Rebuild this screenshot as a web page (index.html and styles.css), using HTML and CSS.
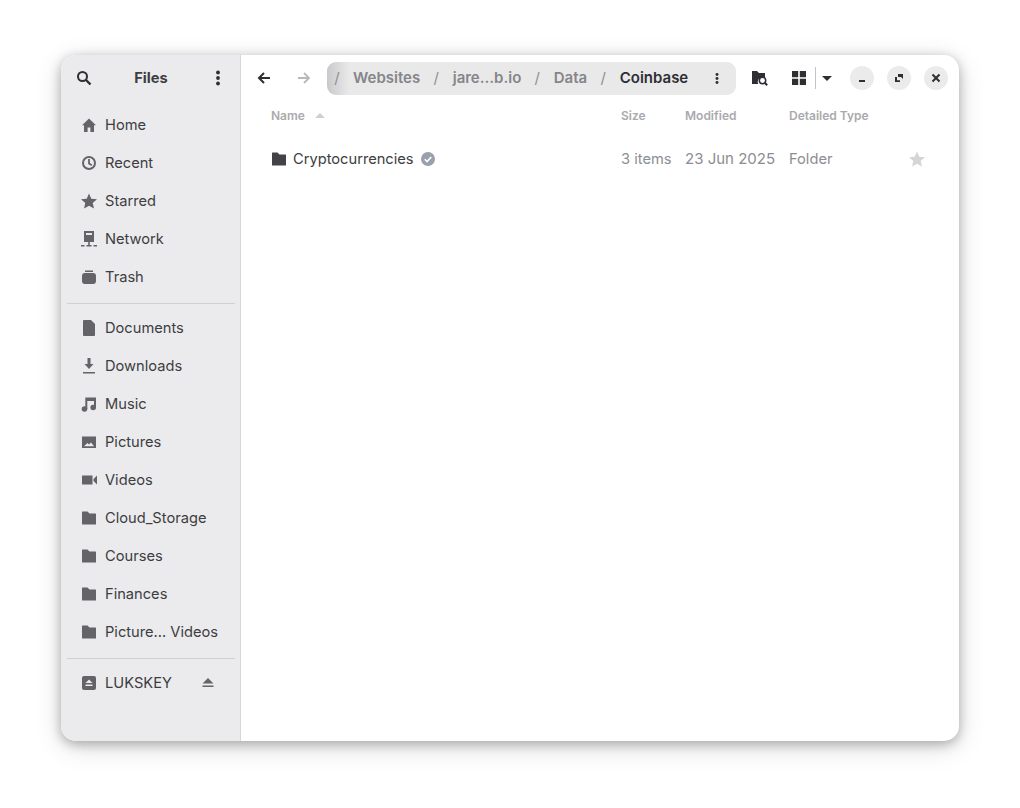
FILE: index.html
```html
<!DOCTYPE html>
<html lang="en">
<head>
<meta charset="utf-8">
<title>Files</title>
<link rel="stylesheet" href="styles.css">
</head>
<body>
<main class="window">
  <aside class="sidebar">
    <header class="side-head">
      <svg class="ico16 dark" viewBox="0 0 16 16"><circle cx="6.5" cy="6.5" r="4.500" fill="none" stroke="currentColor" stroke-width="2"/><path d="M10 10l4.500 4.500" stroke="currentColor" stroke-width="2.400" fill="none"/></svg>
      <span class="side-title">Files</span>
      <svg class="ico16 dark" viewBox="0 0 16 16"><circle cx="8" cy="2.500" r="1.900"/><circle cx="8" cy="8" r="1.900"/><circle cx="8" cy="13.500" r="1.900"/></svg>
    </header>
    <ul class="places">
      <li class="place"><svg class="ico16" viewBox="0 0 16 16"><path d="M8 1.500L1 8.200h2V15h3.600v-4.500h2.800V15H13V8.200h2z"/></svg>Home</li>
      <li class="place"><svg class="ico16" viewBox="0 0 16 16"><circle cx="8" cy="8" r="6" fill="none" stroke="currentColor" stroke-width="2"/><path d="M8 4v4.400l2.800 1.800" fill="none" stroke="currentColor" stroke-width="1.800"/></svg>Recent</li>
      <li class="place"><svg class="ico16" viewBox="0 0 16 16"><path d="M8 .5l2.300 5.200 5.700.6-4.300 3.700 1.300 5.600L8 12.700 3 15.600l1.300-5.600L0 6.300l5.700-.6z"/></svg>Starred</li>
      <li class="place"><svg class="ico16" viewBox="0 0 16 16"><path d="M3 .5a1 1 0 0 1 1-1h8a1 1 0 0 1 1 1V11H3zM5 2v2h6V2z" fill-rule="evenodd"/><path d="M0 14h3.500v1.500H0zM5.500 14h5v1.500h-5zM12.500 14H16v1.500h-3.500zM7.200 11h1.600v3H7.200z"/></svg>Network</li>
      <li class="place"><svg class="ico16" viewBox="0 0 16 16"><path d="M4 1.500h8V3H4zM4 4h8a3 3 0 0 1 3 3v5a3 3 0 0 1-3 3H4a3 3 0 0 1-3-3V7a3 3 0 0 1 3-3z"/></svg>Trash</li>
    </ul>
    <hr class="rule rule-first">
    <ul class="places">
      <li class="place"><svg class="ico16" viewBox="0 0 16 16"><path d="M2 1a1 1 0 0 1 1-1h7l4 4v11a1 1 0 0 1-1 1H3a1 1 0 0 1-1-1z"/></svg>Documents</li>
      <li class="place"><svg class="ico16" viewBox="0 0 16 16"><path d="M6.500 0h3v6h3L8 11 3.500 6h3zM2 14h12v1.600H2z"/></svg>Downloads</li>
      <li class="place"><svg class="ico16" viewBox="0 0 16 16"><circle cx="3.500" cy="13" r="2.800"/><circle cx="12.200" cy="11.500" r="2.800"/><path d="M4.300 1.500H15v10h-2V5H6.300v8h-2z"/></svg>Music</li>
      <li class="place"><svg class="ico16" viewBox="0 0 16 16"><path d="M1 2.500h14V14H1zm2 9.800h10l-3-3.800-2 2-1.500-1.500z" fill-rule="evenodd"/></svg>Pictures</li>
      <li class="place"><svg class="ico16" viewBox="0 0 16 16"><path d="M1 3.500h10.500v9H1zM12.500 7L16 3.500v9L12.500 9z"/></svg>Videos</li>
      <li class="place"><svg class="ico16" viewBox="0 0 16 16"><use href="#folder"/></svg>Cloud_Storage</li>
      <li class="place"><svg class="ico16" viewBox="0 0 16 16"><use href="#folder"/></svg>Courses</li>
      <li class="place"><svg class="ico16" viewBox="0 0 16 16"><use href="#folder"/></svg>Finances</li>
      <li class="place"><svg class="ico16" viewBox="0 0 16 16"><use href="#folder"/></svg>Picture... Videos</li>
    </ul>
    <hr class="rule rule-second">
    <ul class="places">
      <li class="place"><svg class="ico16" viewBox="0 0 16 16"><path d="M3 1h10a2 2 0 0 1 2 2v10a2 2 0 0 1-2 2H3a2 2 0 0 1-2-2V3a2 2 0 0 1 2-2zm5 3.500L4.500 8h7zM4.500 9.500V11h7V9.500z" fill-rule="evenodd"/></svg><span class="grow">LUKSKEY</span><svg class="ico-eject" viewBox="0 0 12 10"><path d="M6 0l5.500 5.500H.5zM.5 7.500h11V9H.5z"/></svg></li>
    </ul>
  </aside>

  <section class="content">
    <header class="toolbar">
      <svg class="nav-ico dark-ico" viewBox="0 0 16 16"><path d="M14 8H3M8 3L3 8l5 5" fill="none" stroke="currentColor" stroke-width="2"/></svg>
      <svg class="nav-ico faint-ico" viewBox="0 0 16 16"><path d="M2 8h11M8 3l5 5-5 5" fill="none" stroke="currentColor" stroke-width="1.800"/></svg>
      <nav class="path">
        <span class="sep sep-root">/</span>
        <span class="crumb">Websites</span>
        <span class="sep">/</span>
        <span class="crumb">jare…b.io</span>
        <span class="sep">/</span>
        <span class="crumb">Data</span>
        <span class="sep">/</span>
        <span class="crumb current">Coinbase</span>
        <svg class="path-menu" viewBox="0 0 4 12"><circle cx="2" cy="1.700" r="1.600"/><circle cx="2" cy="6" r="1.600"/><circle cx="2" cy="10.300" r="1.600"/></svg>
      </nav>
      <svg class="find-ico" viewBox="0 0 16 16"><path d="M0 1h5l2 2h6v4.500A5 5 0 0 0 6.200 14H0z"/><circle cx="10.500" cy="10.500" r="3.200" fill="none" stroke="currentColor" stroke-width="1.500"/><path d="M12.800 12.800l2.400 2.400" stroke="currentColor" stroke-width="2"/></svg>
      <svg class="grid-ico" viewBox="0 0 14 14"><path d="M0 0h6.200v6.200H0zM7.800 0H14v6.200H7.800zM0 7.800h6.200V14H0zM7.800 7.800H14V14H7.800z"/></svg>
      <span class="divider"></span>
      <svg class="caret-ico" viewBox="0 0 10 5"><path d="M0 0h10L5 5z"/></svg>
      <div class="win-buttons">
        <button class="win-btn"><svg viewBox="0 0 10 10"><path d="M2 7h6v2H2z"/></svg></button>
        <button class="win-btn"><svg viewBox="0 0 10 10"><path d="M4 1h5v5L7 4H4zM1 4v5h5V7.200H3V4z"/></svg></button>
        <button class="win-btn"><svg viewBox="0 0 10 10"><path d="M1.500 1.500l7 7M8.500 1.500l-7 7" stroke="currentColor" stroke-width="2" fill="none"/></svg></button>
      </div>
    </header>
    <div class="columns">
      <span class="col-name col-head">Name<svg class="sort-ico" viewBox="0 0 10 5"><path d="M5 0l5 5H0z"/></svg></span>
      <span class="col-size col-head">Size</span>
      <span class="col-mod col-head">Modified</span>
      <span class="col-type col-head">Detailed Type</span>
    </div>
    <div class="row">
      <span class="col-name file-name">
        <svg class="file-ico" viewBox="0 0 16 16"><use href="#folder"/></svg>
        Cryptocurrencies
        <svg class="emblem" viewBox="0 0 14 14"><circle cx="7" cy="7" r="7" fill="#99a1ac"/><path d="M3.800 7.200l2.300 2.300 4.200-4.500" fill="none" stroke="#fff" stroke-width="1.600"/></svg>
      </span>
      <span class="col-size muted">3 items</span>
      <span class="col-mod muted date">23 Jun 2025</span>
      <span class="col-type muted">Folder</span>
      <svg class="row-star" viewBox="0 0 16 16"><path d="M8 .5l2.300 5.200 5.700.6-4.300 3.700 1.300 5.600L8 12.700 3 15.600l1.300-5.600L0 6.300l5.700-.6z"/></svg>
    </div>
  </section>
</main>
<svg class="defs" aria-hidden="true"><defs><path id="folder" d="M1 2a.5.5 0 0 1 .5-.5h5L8.500 3.500H14.500a.5.5 0 0 1 .5.5v10a.5.5 0 0 1-.5.5h-13a.5.5 0 0 1-.5-.5z" fill="currentColor"/></defs></svg>
</body>
</html>
```

FILE: styles.css
```css
* { box-sizing: border-box; }
html, body { margin: 0; height: 100%; }
body {
  width: 1020px;
  height: 808px;
  padding: 55px 61px 67px;
  background: #fff;
  font-family: Inter, "Liberation Sans", sans-serif;
  font-size: 14.67px;
  color: #3d3d42;
  overflow: hidden;
}
.defs { position: absolute; width: 0; height: 0; }
ul { list-style: none; margin: 0; padding: 0; }
.window {
  display: flex;
  width: 898px;
  height: 686px;
  border-radius: 15px;
  overflow: hidden;
  background: #fff;
  box-shadow: 0 3px 12px rgba(0,0,0,.28), 0 6px 28px rgba(0,0,0,.14);
}
.sidebar {
  width: 180px;
  flex: none;
  background: #ebebed;
  border-right: 1px solid #d6d6d8;
  padding: 0 5px 0 6px;
  display: flex;
  flex-direction: column;
}
.side-head {
  height: 45px;
  margin-bottom: 6px;
  padding: 0 9px 0 9px;
  display: flex;
  align-items: center;
  justify-content: space-between;
  color: #2e2e33;
}
.side-title { font-weight: 700; color: #3d3d42; }
.ico16 { width: 16px; height: 16px; flex: none; fill: #636368; color: #636368; }
.ico16.dark { fill: #2e2e33; color: #2e2e33; }
.place {
  height: 38px;
  display: flex;
  align-items: center;
  gap: 8px;
  padding-left: 14px;
  white-space: nowrap;
}
.grow { flex: 1; }
.ico-eject { width: 12px; height: 10px; margin-right: 21px; fill: #636368; }
.rule { border: 0; border-top: 1px solid #d0d0d3; margin: 0; }
.rule-first { margin: 7px 0 5px; }
.rule-second { margin: 7px 0 5px; }

.content { flex: 1; min-width: 0; display: flex; flex-direction: column; }
.toolbar {
  height: 46px;
  display: flex;
  align-items: center;
  padding-left: 15px;
  color: #2e2e33;
}
.nav-ico { width: 16px; height: 16px; flex: none; }
.dark-ico { color: #2e2e33; margin-right: 24px; }
.faint-ico { color: #b9b9bc; margin-right: 15px; }
.path {
  width: 409px;
  height: 33px;
  border-radius: 9px;
  display: flex;
  align-items: center;
  padding: 0 0 2px 6px;
  background: linear-gradient(90deg, #c9c9cb 0, #e9e9ea 22px, #e9e9ea 100%);
  color: #85858a;
  font-size: 15px;
  font-weight: 600;
  flex: none;
  position: relative;
}
.sep { font-weight: 400; color: #8f8f93; width: 8px; margin: 0 12.5px 0 12px; text-align: center; }
.sep-root { margin: 0 12px 0 0; }
.current { color: #2e2e33; }
.path-menu { position: absolute; left: 388px; top: 11px; width: 4px; height: 11px; fill: #2e2e33; }
.find-ico { width: 16px; height: 16px; margin-left: 16px; flex: none; fill: #2e2e33; color: #2e2e33; }
.grid-ico { width: 14px; height: 14px; margin-left: 24px; flex: none; fill: #2e2e33; }
.divider { width: 1px; height: 22px; background: #c4c4c6; margin-left: 9px; flex: none; }
.caret-ico { width: 10px; height: 5px; margin-left: 6px; flex: none; fill: #2e2e33; }
.win-buttons { display: flex; gap: 13px; margin-left: 18px; }
.win-btn {
  width: 24px;
  height: 24px;
  padding: 0;
  border: 0;
  border-radius: 50%;
  background: #ebebeb;
  display: flex;
  align-items: center;
  justify-content: center;
  color: #2e2e33;
  fill: #2e2e33;
}
.win-btn svg { width: 10px; height: 10px; }
.columns {
  height: 29px;
  display: flex;
  align-items: center;
  padding-left: 30px;
  font-size: 12px;
  font-weight: 600;
  color: #aaaaad;
}
.col-name { width: 350px; flex: none; display: flex; align-items: center; }
.col-size { width: 64px; flex: none; }
.col-mod { width: 104px; flex: none; }
.col-type { flex: none; }
.sort-ico { width: 10px; height: 5px; margin-left: 10px; fill: #cfcfd1; }
.row {
  height: 58px;
  display: flex;
  align-items: center;
  padding-left: 30px;
  position: relative;
}
.file-name { gap: 6px; color: #3d3d42; }
.file-ico { width: 16px; height: 16px; flex: none; color: #424247; }
.emblem { width: 14px; height: 14px; margin-left: 1px; flex: none; }
.muted { color: #8d8d91; }
.date { font-size: 15px; margin-bottom: 2px; }
.row-star { position: absolute; left: 668px; top: 21px; width: 16px; height: 16px; fill: #d5d5d7; }
```
